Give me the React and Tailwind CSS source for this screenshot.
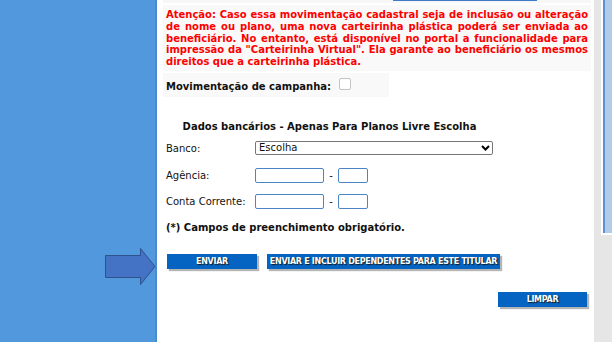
import React from "react";

const warningLines = [
  "Atenção: Caso essa movimentação cadastral seja de inclusão ou alteração",
  "de nome ou plano, uma nova carteirinha plástica poderá ser enviada ao",
  "beneficiário. No entanto, está disponível no portal a funcionalidade para",
  'impressão da "Carteirinha Virtual". Ela garante ao beneficiário os mesmos',
];

const Button = ({ label, width }) => (
  <button
    type="button"
    className={`${width} h-[15px] bg-[#0563c1] text-white font-bold text-[8px] leading-[15px] tracking-[-0.3px] text-center shadow-[2px_2px_1px_#b5b5b5] [text-shadow:1px_1px_1px_#1a1a1a]`}
  >
    {label}
  </button>
);

const App = () => {
  return (
    <div className="flex w-[612px] h-[342px] overflow-hidden bg-white font-['DejaVu_Sans',sans-serif]">
      {/* left panel with arrow */}
      <div className="w-[157px] shrink-0 bg-[#5198dc] border-r-2 border-[#4a8bd0] pt-[248px] pl-[105px]">
        <svg width="51" height="37" viewBox="0 0 51 37">
          <path
            d="M0.5 7.5 H35.5 V0.5 L50 18.5 L35.5 36.5 V29.5 H0.5 Z"
            fill="#4472c4"
            stroke="#2f528f"
          />
        </svg>
      </div>

      {/* main content */}
      <div className="w-[437px] shrink-0 flex flex-col">
        <div className="ml-[6px] mr-[3px] h-[3px] bg-[#f7f7f7]">
          <div className="ml-[230px] w-[144px] h-[1px] bg-[#3d7ac7]" />
        </div>

        <div className="mt-[2px] ml-[6px] mr-[3px] bg-[#f9f9f9] px-[3px] pt-[4px] pb-[3px] text-[#ff0000] font-bold text-[10px] leading-[11.75px]">
          {warningLines.map((line) => (
            <div key={line} className="text-justify [text-align-last:justify]">
              {line}
            </div>
          ))}
          <div>direitos que a carteirinha plástica.</div>
        </div>

        <div className="mt-[2px] ml-[6px] w-[226px] h-[24px] bg-[#f9f9f9] flex items-center px-[3px]">
          <span className="mt-[4px] font-bold text-[10px] text-[#111]">
            Movimentação de campanha:
          </span>
          <span className="ml-[8px] mt-[-1px] w-[12px] h-[12px] rounded-[2px] border border-[#c4c4c4] bg-white" />
        </div>

        <div className="ml-[9px] w-[327px] flex flex-col text-[10px] text-[#111]">
          <div className="mt-[24px] h-[12px] leading-[12px] text-center font-bold">
            Dados bancários - Apenas Para Planos Livre Escolha
          </div>

          <div className="mt-[8px] flex items-center">
            <span className="w-[89px]">Banco:</span>
            <div className="w-[238px] h-[14px] border border-[#767676] rounded-[2px] flex items-center justify-between pl-[3px] pr-[2px]">
              <span className="leading-[12px]">Escolha</span>
              <svg width="9" height="6" viewBox="0 0 9 6">
                <path d="M1 1 L4.5 4.5 L8 1" fill="none" stroke="#000" strokeWidth="2" />
              </svg>
            </div>
          </div>

          <div className="mt-[12px] flex items-center">
            <span className="w-[89px]">Agência:</span>
            <span className="w-[69px] h-[15px] border border-[#4c84c4] rounded-[2px] bg-white" />
            <span className="w-[14px] text-center">-</span>
            <span className="w-[30px] h-[15px] border border-[#4c84c4] rounded-[2px] bg-white" />
          </div>

          <div className="mt-[11px] flex items-center">
            <span className="w-[89px]">Conta Corrente:</span>
            <span className="w-[69px] h-[15px] border border-[#4c84c4] rounded-[2px] bg-white" />
            <span className="w-[14px] text-center">-</span>
            <span className="w-[30px] h-[15px] border border-[#4c84c4] rounded-[2px] bg-white" />
          </div>

          <div className="mt-[13px] h-[12px] leading-[12px] font-bold">
            (*) Campos de preenchimento obrigatório.
          </div>
        </div>

        <div className="mt-[20px] ml-[10px] flex gap-[10px]">
          <Button label="ENVIAR" width="w-[90px]" />
          <Button label="ENVIAR E INCLUIR DEPENDENTES PARA ESTE TITULAR" width="w-[233px]" />
        </div>

        <div className="mt-[16px] ml-[341px]">
          <Button label="LIMPAR" width="w-[89px]" />
        </div>
      </div>

      {/* right strip */}
      <div className="flex-1 bg-[#e6e6e6]">
        <div className="ml-[7px] h-[235px] border-l-2 border-b-2 border-white">
          <div className="h-full border-l-2 border-[#5b8fd6] bg-[#b2cbe6]" />
        </div>
      </div>
    </div>
  );
};

export default App;
